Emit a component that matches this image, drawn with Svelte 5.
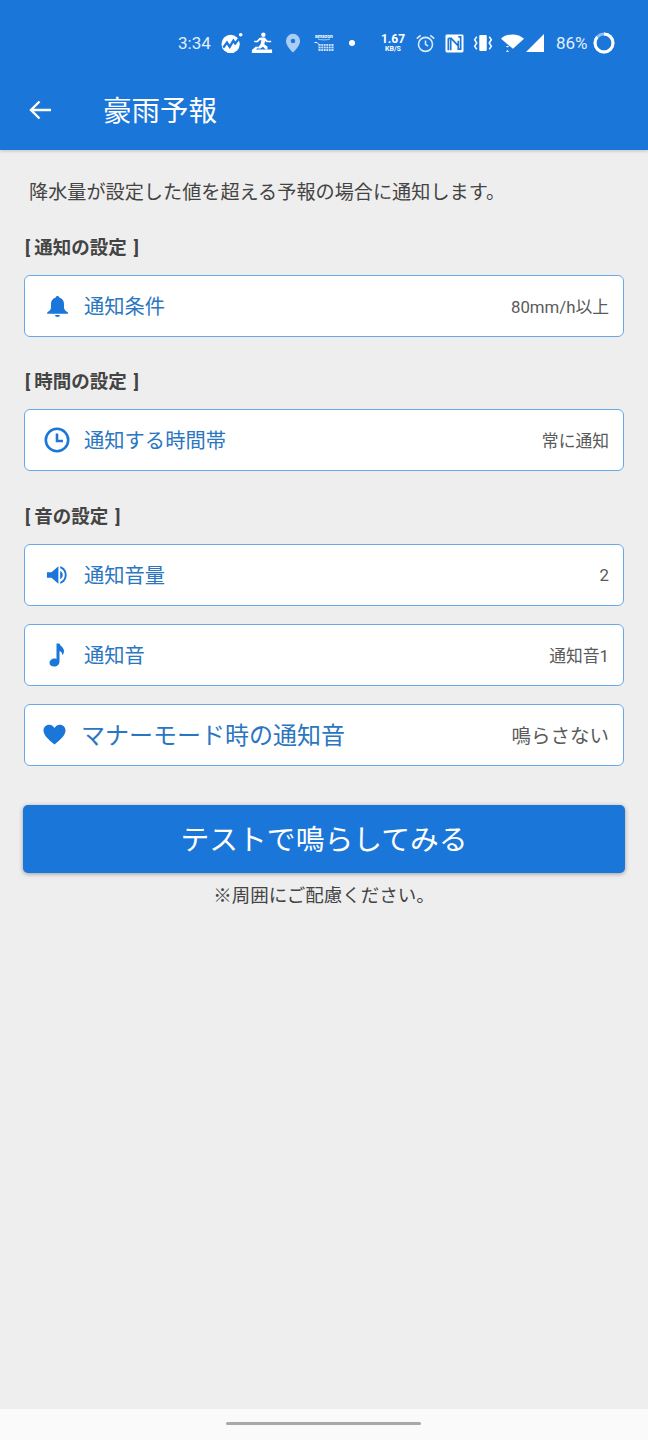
<script>
  const sections = [
    {
      title: '通知の設定',
      rows: [{ icon: 'bell', label: '通知条件', value: '80mm/h以上' }]
    },
    {
      title: '時間の設定',
      rows: [{ icon: 'clock', label: '通知する時間帯', value: '常に通知' }]
    },
    {
      title: '音の設定',
      rows: [
        { icon: 'volume', label: '通知音量', value: '2' },
        { icon: 'note', label: '通知音', value: '通知音1' },
        { icon: 'heart', label: 'マナーモード時の通知音', value: '鳴らさない', big: true }
      ]
    }
  ]
</script>

<div class="screen">
  <header class="appbar">
    <div class="status">
      <span class="status__time">3:34</span>
      <svg class="st st--chart" viewBox="0 0 24 24">
        <circle cx="10.500" cy="13" r="10" fill="#fff"/>
        <path fill="none" stroke="#1a76d9" stroke-width="2.600" d="M2.500 17l4-5.500 3 4.500 4-6.500 2 3 4-5"/>
        <circle cx="21.500" cy="3" r="2" fill="#fff"/>
      </svg>
      <svg class="st st--exit" viewBox="0 0 24 24" fill="#fff">
        <circle cx="13.500" cy="3" r="2.400"/>
        <path d="M11 6h4l3 3.500h4v1.800h-5l-1.500-1.500-1 3.500 3.500 2.500V19h-2l-3-3-2.500 2H7l3.500-5 .8-4H9.500l-2 2.200H3.500V9.500h3L9 6.500z"/>
        <path d="M1 23v-3.500L5 16h3.500l-3 3H23v4z"/>
      </svg>
      <svg class="st st--pin" viewBox="0 0 24 24">
        <path fill="#a9cdf3" fill-rule="evenodd" d="M12 1a8.500 8.500 0 0 0-8.500 8.500C3.500 15.500 12 23.500 12 23.500S20.500 15.500 20.500 9.500A8.500 8.500 0 0 0 12 1zm0 11.200a2.700 2.700 0 1 1 0-5.400 2.700 2.700 0 0 1 0 5.400z"/>
      </svg>
      <svg class="st st--cart" viewBox="0 0 20 20">
        <text x="10" y="4.500" class="st__amazon">amazon</text>
        <path d="M4 6c3 1.200 9 1.200 12 0" stroke="#e3effc" stroke-width=".7" fill="none"/>
        <path d="M0.500 9.500h2.500l1.500 1.500" stroke="#fff" stroke-width="1" fill="none"/>
        <rect x="4.500" y="11" width="15" height="7" fill="#cfe3fa"/>
        <path d="M4.500 13.300h15M4.500 15.600h15M7 11v7M9.500 11v7M12 11v7M14.500 11v7M17 11v7" stroke="#1a76d9" stroke-width=".7"/>
      </svg>
      <span class="st__dot"></span>
      <span class="status__speed"><b>1.67</b><i>KB/S</i></span>
      <svg class="st st--alarm" viewBox="0 0 24 24" fill="none" stroke="#dcebfb" stroke-width="1.800">
        <circle cx="12" cy="13" r="8"/>
        <path d="M12 8.500V13l3 2M2 6.500L6.500 2.800M22 6.500L17.500 2.800"/>
      </svg>
      <svg class="st st--nfc" viewBox="0 0 20 20">
        <rect x="0.500" y="0.500" width="19" height="19" rx="1.500" fill="#fff"/>
        <path fill="none" stroke="#1a76d9" stroke-width="1.800" d="M6 17V4.500h-2.500M3.500 4.500V17M6 4l8 8.500M14 3h2.500v13H14V7"/>
      </svg>
      <svg class="st st--vibrate" viewBox="0 0 24 24">
        <rect x="7.500" y="2.500" width="9" height="19" rx="1" fill="#fff"/>
        <path fill="none" stroke="#fff" stroke-width="1.800" d="M4.500 4.500L2 8l2.500 4L2 16l2.500 3.500M19.500 4.500L22 8l-2.500 4L22 16l-2.500 3.500"/>
      </svg>
      <svg class="st st--wifi" viewBox="0 0 24 20" fill="#fff">
        <path d="M0 5.500C3 2.500 7.500 1 12 1s9 1.500 12 4.500L12.500 16 7 11.500z"/>
        <path d="M5 13l1.800 1.800L8.500 13zM5 19l1.800-1.800L8.500 19z"/>
      </svg>
      <svg class="st st--signal" viewBox="0 0 20 20">
        <path fill="#fff" d="M19 1v18H1z"/>
      </svg>
      <span class="status__pct">86%</span>
      <svg class="st st--battery" viewBox="0 0 22 22" fill="none" stroke-width="3">
        <circle cx="11" cy="11" r="9" stroke="#8fbdf0"/>
        <circle cx="11" cy="11" r="9" stroke="#fff" stroke-dasharray="48.600 56.500" transform="rotate(-90 11 11)"/>
      </svg>
    </div>
    <div class="toolbar">
      <svg class="toolbar__back" viewBox="0 0 24 24">
        <path fill="none" stroke="#fff" stroke-width="2.400" d="M23 12H3M11.500 3.500L3 12l8.500 8.500"/>
      </svg>
      <h1 class="toolbar__title">豪雨予報</h1>
    </div>
  </header>

  <main class="content">
    <p class="content__desc">降水量が設定した値を超える予報の場合に通知します。</p>

    {#each sections as section}
      <section class="group">
        <h2 class="group__title">
          <span class="group__open">[</span>{section.title}<span class="group__close">]</span>
        </h2>
        <div class="group__rows">
          {#each section.rows as row}
            <div class="row">
              <span class="row__icon" class:row__icon--big={row.big}>
                {#if row.icon === 'bell'}
                  <svg viewBox="0 0 21 21" width="21" height="21" fill="#1a76d9">
                    <path d="M10.500 0C9.500 0 8.800.7 8.800 1.500 5.500 2.300 4 5 4 8v3.500c0 2-1.700 3.500-3.500 4.500L0 17.800h21V16.500c-2-1-4-2.800-4-5V8c0-3-1.500-5.700-4.800-6.500C12.200.7 11.500 0 10.500 0z"/>
                    <path d="M8 19h5a2.500 2 0 0 1-5 0z"/>
                  </svg>
                {:else if row.icon === 'clock'}
                  <svg viewBox="0 0 26 26" width="26" height="26" fill="none" stroke="#1a76d9" stroke-width="2.600">
                    <circle cx="13" cy="13" r="11.200"/>
                    <path d="M13 6.500V14h6"/>
                  </svg>
                {:else if row.icon === 'volume'}
                  <svg viewBox="0 0 24 24" width="22" height="22" fill="#1a76d9">
                    <path d="M1 9h5l7.500-6.500v19L6 15H1z"/>
                    <path d="M15.500 7.500c2 1 2.800 2.700 2.800 4.500s-.8 3.500-2.800 4.500z"/>
                    <path d="M15.500 2.500c4.500 1 7 5 7 9.500s-2.500 8.500-7 9.500v-2c3-1 5-4 5-7.500s-2-6.500-5-7.500z"/>
                  </svg>
                {:else if row.icon === 'note'}
                  <svg viewBox="0 0 16 24" width="16" height="24" fill="#1a76d9">
                    <path d="M7.500 0.500h3c.6 2.600 4.500 3.800 4.500 7.500 0 1.900-.8 3.300-1.800 4.200.3-2.400-1.500-3.900-2.700-4.200V18.500c0 3-2.500 5-5.200 5C2.300 23.500.5 22 .5 20c0-2.500 2.500-4.500 5-4.500.8 0 1.400.1 2 .4z"/>
                  </svg>
                {:else}
                  <svg viewBox="0 0 24 22" width="23" height="21" fill="#1a76d9">
                    <path d="M12 21.500C5 15.500 0.500 11.500 0.500 6.700 0.500 3.200 3.200 0.800 6.300 0.800c2.300 0 4.500 1.300 5.700 3.400C13.200 2.100 15.400 0.800 17.700 0.800c3.100 0 5.800 2.400 5.800 5.900 0 4.800-4.500 8.800-11.500 14.800z"/>
                  </svg>
                {/if}
              </span>
              <span class="row__label" class:row__label--big={row.big}>{row.label}</span>
              <span class="row__value" class:row__value--big={row.big}>{row.value}</span>
            </div>
          {/each}
        </div>
      </section>
    {/each}

    <button class="test">テストで鳴らしてみる</button>
    <p class="content__note">※周囲にご配慮ください。</p>
  </main>

  <footer class="nav">
    <span class="nav__handle"></span>
  </footer>
</div>

<style>
  :global(body) {
    margin: 0;
    background: #eeeeee;
  }

  .screen {
    display: flex;
    flex-direction: column;
    width: 648px;
    height: 1440px;
    overflow: hidden;
    font-family: Roboto, "Noto Sans CJK JP", sans-serif;
    background: #eeeeee;
  }

  .appbar {
    height: 150px;
    flex: none;
    background: #1a76d9;
    box-shadow: 0 1px 3px rgba(0, 0, 0, 0.2);
    position: relative;
  }

  .status {
    display: flex;
    align-items: center;
    height: 30px;
    padding: 28px 33px 0 178px;
    color: #e3effc;
    font-size: 17px;
  }

  .st {
    display: block;
    flex: none;
  }

  .status__time {
    width: 33px;
  }

  .st--chart {
    width: 22px;
    height: 22px;
    margin-left: 10px;
  }

  .st--exit {
    width: 22px;
    height: 22px;
    margin-left: 8px;
  }

  .st--pin {
    width: 20px;
    height: 20px;
    margin-left: 10px;
  }

  .st--cart {
    width: 20px;
    height: 20px;
    margin-left: 11px;
  }

  .st__amazon {
    font-size: 5px;
    font-weight: 700;
    fill: #fff;
    text-anchor: middle;
  }

  .st__dot {
    width: 6px;
    height: 6px;
    margin-left: 15px;
    border-radius: 50%;
    background: #fff;
  }

  .status__speed {
    display: flex;
    flex-direction: column;
    align-items: center;
    width: 24px;
    margin-left: 26px;
    color: #fff;
    line-height: 1;
  }

  .status__speed b {
    font-size: 12px;
    line-height: 11px;
  }

  .status__speed i {
    font-size: 7px;
    font-style: normal;
    font-weight: 700;
    line-height: 8px;
  }

  .st--alarm {
    width: 21px;
    height: 21px;
    margin-left: 10px;
  }

  .st--nfc {
    width: 19px;
    height: 19px;
    margin-left: 9px;
  }

  .st--vibrate {
    width: 20px;
    height: 20px;
    margin-left: 9px;
  }

  .st--wifi {
    width: 23px;
    height: 20px;
    margin-left: 8px;
  }

  .st--signal {
    width: 20px;
    height: 20px;
    margin-left: 1px;
  }

  .status__pct {
    margin-left: 11px;
  }

  .st--battery {
    width: 22px;
    height: 22px;
    margin-left: 5px;
  }

  .toolbar {
    display: flex;
    align-items: center;
    height: 62px;
    padding: 21px 0 0 28px;
  }

  .toolbar__back {
    width: 24px;
    height: 24px;
  }

  .toolbar__title {
    margin: 3px 0 0 51px;
    color: #fff;
    font-size: 28.5px;
    font-weight: 400;
    line-height: 40px;
  }

  .content {
    flex: 1;
    padding: 0 24px;
  }

  .content__desc {
    margin: 30px 0 0 5px;
    color: #444;
    font-size: 19.15px;
    line-height: 26px;
  }

  .group {
    margin-top: 32.4px;
  }

  .group:first-of-type {
    margin-top: 29px;
  }

  .group__title {
    margin: 0 0 14px;
    color: #444;
    font-size: 18.5px;
    font-weight: 700;
    line-height: 26px;
  }

  .group__open {
    margin: 0 4px 0 1px;
  }

  .group__close {
    margin-left: 7px;
  }

  .group__rows {
    display: flex;
    flex-direction: column;
    gap: 18px;
  }

  .row {
    display: flex;
    align-items: center;
    height: 60px;
    padding: 0 14px 0 18px;
    background: #fff;
    border: 1px solid #67a9e6;
    border-radius: 6px;
  }

  .row__icon {
    display: flex;
    align-items: center;
    justify-content: center;
    width: 28px;
    margin-right: 13px;
  }

  .row__icon--big {
    margin: 0 13px 0 -3px;
  }

  .row__label {
    flex: 1;
    padding-bottom: 2px;
    color: #2a76c0;
    font-size: 20.3px;
  }

  .row__label--big {
    padding-bottom: 2px;
    font-size: 24px;
  }

  .row__value {
    padding-bottom: 0;
    color: #5a5a5a;
    font-size: 16.8px;
  }

  .row__value--big {
    font-size: 19.5px;
  }

  .test {
    display: block;
    width: 602px;
    height: 68px;
    margin: 39px 0 0 -1px;
    padding: 0 0 3px;
    color: #fff;
    font-family: inherit;
    font-size: 28.8px;
    background: #1a76d9;
    border: none;
    border-radius: 5px;
    box-shadow: 0 1px 4px rgba(0, 0, 0, 0.35);
  }

  .content__note {
    margin: 9px 0 0;
    color: #444;
    font-size: 18.5px;
    line-height: 28px;
    text-align: center;
  }

  .nav {
    position: relative;
    display: flex;
    justify-content: center;
    height: 31px;
    flex: none;
    background: #fafafa;
  }

  .nav__handle {
    width: 195px;
    height: 3px;
    margin-top: 13px;
    margin-right: 1px;
    background: #a8a8a8;
    border-radius: 2px;
  }
</style>
